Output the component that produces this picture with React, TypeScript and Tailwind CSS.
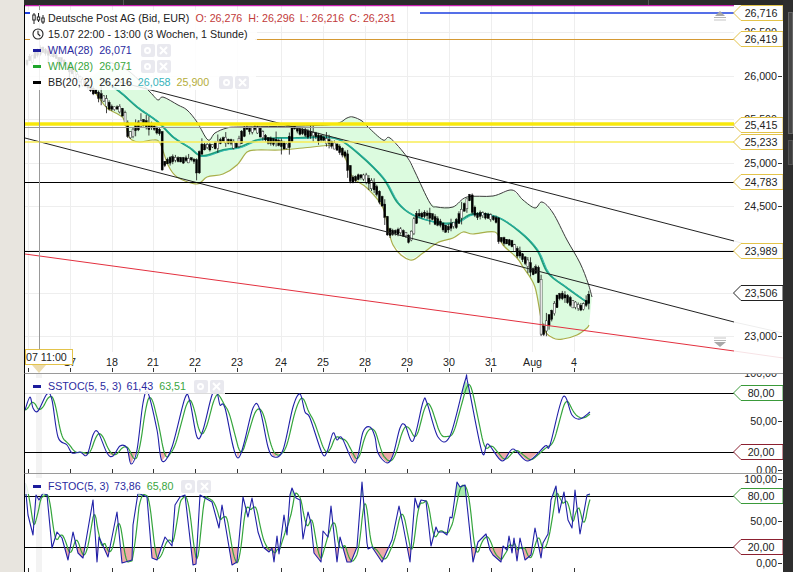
import React from "react";

type P = [number, number];

const TICKS = [28, 70, 112, 153, 195, 237, 281, 323, 365, 407, 449, 491, 532, 574];

const UPPER: P[] = [[110, 62], [130, 72], [150, 92], [158, 100], [163, 97], [178, 105], [187, 110], [197, 122], [208, 140], [215, 133], [227, 128], [240, 127], [300, 126], [335, 124], [347, 118], [353, 117], [362, 121], [368, 127], [383, 140], [390, 138], [407, 157], [415, 172], [430, 203], [437, 207], [453, 207], [467, 197], [493, 196], [512, 190], [523, 200], [535, 208], [542, 202], [553, 213], [567, 240], [580, 263], [588, 283], [592, 297]];
const LOWER: P[] = [[85, 82], [97, 95], [107, 108], [123, 118], [128, 135], [132, 140], [140, 142], [153, 140], [160, 143], [168, 165], [177, 177], [197, 184], [207, 177], [223, 174], [237, 165], [247, 152], [257, 150], [280, 150], [303, 148], [333, 145], [340, 148], [347, 162], [353, 178], [367, 188], [383, 208], [393, 245], [410, 260], [423, 253], [437, 243], [453, 238], [463, 232], [473, 234], [495, 232], [503, 245], [517, 258], [523, 267], [535, 287], [543, 327], [553, 338], [563, 339], [577, 335], [587, 328], [589, 325]];
const MID: P[] = [[100, 78], [120, 92], [137, 107], [158, 122], [173, 137], [190, 148], [202, 156], [223, 150], [240, 147], [257, 140], [277, 138], [297, 138], [323, 137], [340, 140], [360, 155], [383, 178], [397, 202], [413, 215], [440, 223], [457, 222], [473, 214], [497, 217], [520, 232], [537, 250], [548, 273], [567, 288], [588, 303]];
const PRICE: P[] = [[25, 62], [40, 48], [60, 60], [85, 85], [100, 95], [110, 108], [118, 107], [123, 115], [128, 135], [135, 128], [140, 120], [153, 127], [160, 132], [162, 165], [170, 158], [183, 158], [195, 160], [197, 172], [200, 145], [213, 145], [223, 138], [237, 145], [243, 128], [257, 128], [263, 137], [287, 145], [292, 128], [307, 132], [323, 138], [337, 147], [345, 155], [350, 178], [362, 175], [370, 182], [378, 193], [383, 208], [388, 233], [398, 230], [410, 238], [415, 215], [428, 213], [437, 222], [447, 228], [455, 222], [465, 203], [470, 195], [473, 213], [487, 215], [497, 220], [498, 238], [510, 242], [517, 252], [527, 262], [532, 272], [538, 265], [540, 335], [547, 320], [553, 308], [558, 293], [567, 298], [578, 308], [585, 303], [590, 293]];
const SS: P[] = [[25, 410], [30, 397], [33, 408], [38, 411], [47, 394], [52, 400], [58, 437], [67, 445], [72, 453], [80, 452], [87, 455], [93, 435], [98, 432], [107, 453], [113, 456], [120, 446], [127, 448], [131, 464], [137, 450], [143, 403], [148, 393], [157, 430], [162, 461], [172, 447], [185, 398], [190, 402], [197, 437], [203, 430], [212, 395], [217, 393], [220, 405], [225, 408], [238, 458], [253, 408], [260, 410], [268, 447], [274, 457], [283, 450], [293, 407], [300, 394], [305, 412], [310, 418], [322, 453], [327, 452], [333, 433], [337, 440], [342, 438], [355, 463], [363, 432], [370, 427], [375, 437], [378, 453], [387, 463], [393, 455], [400, 428], [405, 425], [413, 441], [423, 402], [427, 403], [438, 437], [450, 436], [465, 381], [468, 384], [482, 452], [488, 444], [502, 461], [513, 449], [528, 461], [545, 446], [550, 445], [563, 397], [572, 415], [580, 419], [590, 412]];
const FS: P[] = [[25, 483], [28, 515], [33, 535], [36, 495], [39, 500], [43, 493], [47, 495], [52, 548], [57, 532], [62, 538], [68, 560], [73, 532], [78, 553], [83, 558], [93, 500], [97, 562], [99, 537], [108, 557], [117, 512], [122, 563], [132, 560], [133, 525], [138, 493], [147, 497], [152, 558], [157, 560], [165, 537], [172, 546], [175, 505], [180, 497], [185, 495], [193, 565], [196, 564], [200, 495], [212, 502], [219, 528], [222, 505], [232, 565], [237, 562], [243, 497], [248, 517], [252, 498], [258, 532], [263, 547], [269, 552], [272, 548], [274, 562], [277, 536], [279, 554], [284, 515], [287, 535], [290, 495], [292, 488], [296, 498], [300, 500], [303, 539], [308, 512], [311, 523], [314, 553], [321, 562], [323, 531], [328, 537], [331, 506], [337, 562], [340, 537], [347, 562], [351, 562], [357, 547], [362, 482], [367, 543], [368, 549], [372, 547], [382, 562], [392, 540], [399, 506], [403, 525], [410, 562], [415, 498], [418, 508], [421, 500], [426, 501], [431, 546], [436, 527], [438, 532], [443, 532], [447, 535], [450, 517], [452, 518], [457, 482], [460, 487], [465, 485], [473, 562], [478, 542], [486, 534], [490, 550], [493, 555], [501, 562], [503, 546], [507, 550], [509, 536], [512, 553], [514, 538], [517, 561], [520, 538], [525, 560], [531, 555], [535, 528], [541, 558], [543, 543], [548, 534], [551, 500], [556, 486], [559, 513], [564, 492], [568, 520], [572, 528], [575, 490], [580, 534], [587, 495], [590, 494]];

const toLine = (pts: P[]) => pts.map(([x, y]) => `${x},${y}`).join(" ");

function smooth(pts: P[]) {
  let d = `M${pts[0][0]} ${pts[0][1]}`;
  for (let i = 0; i < pts.length - 1; i++) {
    const a = pts[Math.max(0, i - 1)];
    const b = pts[i];
    const c = pts[i + 1];
    const e = pts[Math.min(pts.length - 1, i + 2)];
    d += `C${(b[0] + (c[0] - a[0]) / 6).toFixed(1)} ${(b[1] + (c[1] - a[1]) / 6).toFixed(1)} ${(c[0] - (e[0] - b[0]) / 6).toFixed(1)} ${(c[1] - (e[1] - b[1]) / 6).toFixed(1)} ${c[0]} ${c[1]}`;
  }
  return d;
}

function at(pts: P[], x: number) {
  if (x <= pts[0][0]) return pts[0][1];
  for (let i = 0; i < pts.length - 1; i++) {
    if (x <= pts[i + 1][0]) {
      const t = (x - pts[i][0]) / (pts[i + 1][0] - pts[i][0]);
      return pts[i][1] + t * (pts[i + 1][1] - pts[i][1]);
    }
  }
  return pts[pts.length - 1][1];
}

function lagged(pts: P[], win: number, end: number): P[] {
  const out: P[] = [];
  for (let x = 25; x <= end; x += 1) {
    let s = 0;
    for (let k = 0; k < win; k++) s += at(pts, x - k);
    out.push([x, s / win]);
  }
  return out;
}

const rnd = (i: number) => {
  const v = Math.sin(i * 12.9898) * 43758.5453;
  return v - Math.floor(v);
};

function Candles() {
  const bars: React.ReactNode[] = [];
  let i = 0;
  for (let x = 27; x <= 591; x += 2.65, i++) {
    const y0 = at(PRICE, x - 2.65);
    const y1 = at(PRICE, x);
    const top = Math.min(y0, y1) - rnd(i) * 1.5;
    const h = Math.abs(y1 - y0) + 1.5 + rnd(i + 50) * 4;
    const big = rnd(i + 400) > 0.8;
    const wickUp = rnd(i + 100) * (big ? 8 : 2.5);
    const wickDown = rnd(i + 200) * (big ? 8 : 2.5);
    const hollow = rnd(i + 300) > 0.8;
    bars.push(
      <g key={i}>
        <line x1={x} x2={x} y1={top - wickUp} y2={top + h + wickDown} stroke="#111" strokeWidth="0.8" />
        <rect x={x - 1} y={top} width="2" height={h} fill={hollow ? "#fff" : "#000"} stroke="#000" strokeWidth="0.4" />
      </g>
    );
  }
  return <g>{bars}</g>;
}

function XTicks({ y1, y2 }: { y1: number; y2: number }) {
  return (
    <g>
      {TICKS.map((x) => (
        <line key={x} x1={x + 0.5} x2={x + 0.5} y1={y1} y2={y2} stroke="#333" strokeWidth="1" />
      ))}
    </g>
  );
}

function MainPlot() {
  const band = [...UPPER, ...[...LOWER].reverse()];
  return (
    <svg className="block h-[368px] w-[709px]" viewBox="25 5 709 368">
      <rect x="25" y="5" width="709" height="368" fill="#fff" />
      {TICKS.map((x) => (
        <line key={x} x1={x + 0.5} x2={x + 0.5} y1="5" y2="373" stroke="#eeeeee" />
      ))}
      {[32, 76, 119, 163, 206, 250, 293, 336].map((y) => (
        <line key={y} x1="25" x2="734" y1={y + 0.5} y2={y + 0.5} stroke="#eeeeee" />
      ))}
      <polygon points={toLine(band)} fill="#dcfbdf" />
      <path d={smooth(UPPER)} fill="none" stroke="#3a3a3a" strokeWidth="1" />
      <path d={smooth(LOWER)} fill="none" stroke="#a9ae4a" strokeWidth="1.2" />
      <path d={smooth(MID)} fill="none" stroke="#1f9d78" strokeWidth="1.8" />
      <path d={smooth(MID.map(([x, y]) => [x + 1.5, y + 0.5] as P))} fill="none" stroke="#2fb7b0" strokeWidth="1" />
      <Candles />
      <line x1="120" y1="82" x2="734" y2="241" stroke="#222" strokeWidth="1" />
      <line x1="25" y1="138" x2="734" y2="322" stroke="#222" strokeWidth="1" />
      <line x1="25" y1="254" x2="734" y2="351" stroke="#e3303f" strokeWidth="1" />
      <line x1="25" x2="734" y1="5.5" y2="5.5" stroke="#c81bb0" strokeWidth="1.5" />
      <line x1="420" x2="734" y1="13" y2="13" stroke="#1c3fe0" strokeWidth="1.5" />
      <line x1="255" x2="734" y1="39.5" y2="39.5" stroke="#d59a34" strokeWidth="1" />
      <line x1="25" x2="734" y1="124" y2="124" stroke="#f8e80c" strokeWidth="3.5" />
      <line x1="25" x2="734" y1="127.5" y2="127.5" stroke="#9a9a9a" strokeWidth="1" />
      <line x1="25" x2="734" y1="142" y2="142" stroke="#f8ec55" strokeWidth="1.5" />
      <line x1="25" x2="734" y1="182.5" y2="182.5" stroke="#000" strokeWidth="1" />
      <line x1="25" x2="734" y1="251.5" y2="251.5" stroke="#000" strokeWidth="1" />
      <line x1="39.5" x2="39.5" y1="5" y2="349" stroke="#999" strokeWidth="1" />
      <rect x="25" y="352" width="709" height="21" fill="#fff" />
      <XTicks y1={368} y2={372} />
      <polygon points="720,11 725,16 715,16" fill="#a8a8a8" />
      <line x1="714" x2="726" y1="17.5" y2="17.5" stroke="#b5b5b5" />
      <line x1="714" x2="726" y1="20" y2="20" stroke="#c5c5c5" />
      <line x1="714" x2="726" y1="338" y2="338" stroke="#c5c5c5" />
      <line x1="714" x2="726" y1="340.5" y2="340.5" stroke="#b5b5b5" />
      <polygon points="720,347 726,342 714,342" fill="#a8a8a8" />
    </svg>
  );
}

function OscPlot({ id, data, y80, y20, top, h, win, tickY, curved }: { id: string; data: P[]; y80: number; y20: number; top: number; h: number; win: number; tickY: number; curved?: boolean }) {
  const fill = `${toLine(data)} 590,${y20} 25,${y20}`;
  const fillTop = `${toLine(data)} 590,${y80} 25,${y80}`;
  return (
    <svg className="block w-[709px]" height={h} viewBox={`25 ${top} 709 ${h}`}>
      <defs>
        <clipPath id={`${id}-low`}>
          <rect x="25" y={y20} width="709" height="60" />
        </clipPath>
        <clipPath id={`${id}-high`}>
          <rect x="25" y={top} width="709" height={y80 - top} />
        </clipPath>
      </defs>
      <rect x="25" y={top} width="709" height={h} fill="#fff" />
      <rect x="36" y={top} width="6" height={h} fill="#f3f3f3" />
      <polygon points={fill} fill="#eeaaaa" clipPath={`url(#${id}-low)`} />
      <polygon points={fillTop} fill="#a8eab0" clipPath={`url(#${id}-high)`} />
      <line x1="25" x2="734" y1={y80 + 0.5} y2={y80 + 0.5} stroke="#000" strokeWidth="1" />
      <line x1="25" x2="734" y1={y20 + 0.5} y2={y20 + 0.5} stroke="#000" strokeWidth="1" />
      <polyline points={toLine(lagged(data, win, 590))} fill="none" stroke="#35a53c" strokeWidth="1.2" />
      {curved ? (
        <path d={smooth(data)} fill="none" stroke="#2020a8" strokeWidth="1.1" />
      ) : (
        <polyline points={toLine(data)} fill="none" stroke="#2020a8" strokeWidth="1.1" strokeLinejoin="round" />
      )}
      <XTicks y1={tickY} y2={tickY + 4} />
    </svg>
  );
}

function Tag({ pos, text, stroke, color = "text-[#222]" }: { pos: string; text: string; stroke: string; color?: string }) {
  return (
    <div className={`absolute left-[-1px] h-[16px] w-[50px] ${pos}`}>
      <svg className="absolute inset-0" width="50" height="16" viewBox="0 0 50 16">
        <polygon points="50,0.5 8,0.5 0.5,8 8,15.5 50,15.5" fill="#fff" stroke={stroke} strokeWidth="1" />
      </svg>
      <div className={`relative flex h-full items-center justify-center pl-[7px] pr-[1px] text-[10.7px] leading-none ${color}`}>{text}</div>
    </div>
  );
}

function AxisLabel({ pos, text }: { pos: string; text: string }) {
  return (
    <div className={`absolute right-[1px] flex h-[12px] items-center gap-[1px] text-[10.7px] leading-none text-[#222] ${pos}`}>
      <span>{text}</span>
      <span className="h-px w-[4px] bg-[#333]" />
    </div>
  );
}

function Btns() {
  return (
    <div className="flex gap-[2px]">
      <div className="flex h-[13px] w-[14px] items-center justify-center rounded-[2px] bg-[#e9e9ef]">
        <div className="h-[7px] w-[7px] rounded-full border-2 border-white" />
      </div>
      <div className="flex h-[13px] w-[14px] items-center justify-center rounded-[2px] bg-[#e9e9ef]">
        <svg width="9" height="9" viewBox="0 0 9 9">
          <path d="M1 1L8 8M8 1L1 8" stroke="#fff" strokeWidth="2" />
        </svg>
      </div>
    </div>
  );
}

function Dash({ color }: { color: string }) {
  return <div className={`mr-[7px] h-[3px] w-[8px] ${color}`} />;
}

const legendRow = "flex h-[16px] items-center bg-[rgba(255,255,255,0.86)] pl-[8px] text-[10.7px] leading-none whitespace-nowrap";

function Legend() {
  return (
    <div className="absolute left-0 top-[5px] flex flex-col items-start">
      <div className={`${legendRow} w-[382px]`}>
        <svg className="mr-[2px] ml-[-1px]" width="13" height="13" viewBox="0 0 13 13" fill="none" stroke="#222" strokeWidth="1">
          <path d="M2 1V12M6.5 1V10M11 3V12" />
          <rect x="0.8" y="3" width="2.4" height="5" fill="#fff" />
          <rect x="5.3" y="5" width="2.4" height="3" fill="#fff" />
          <rect x="9.8" y="6" width="2.4" height="4" fill="#fff" />
        </svg>
        <span className="ml-[1px] text-[#222]">Deutsche Post AG (Bid, EUR)</span>
        <span className="ml-[6px] text-[#c23a3a]">O: 26,276</span>
        <span className="ml-[6px] text-[#c23a3a]">H: 26,296</span>
        <span className="ml-[5px] text-[#c23a3a]">L: 26,216</span>
        <span className="ml-[5px] text-[#c23a3a]">C: 26,231</span>
      </div>
      <div className={`${legendRow} w-[232px]`}>
        <svg className="mr-[3px] ml-[-1px]" width="12" height="12" viewBox="0 0 12 12" fill="none" stroke="#222" strokeWidth="1.1">
          <circle cx="6" cy="6" r="5" />
          <path d="M6 2.8V6L8.3 8" />
        </svg>
        <span className="ml-[1px] text-[#222]">15.07 22:00 - 13:00 (3 Wochen, 1 Stunde)</span>
      </div>
      <div className={`${legendRow} w-[231px]`}>
        <Dash color="bg-[#1c1c9c]" />
        <span className="text-[#2a2aa0]">WMA(28)</span>
        <span className="ml-[6px] text-[#2a2aa0]">26,071</span>
        <div className="ml-[9px]"><Btns /></div>
      </div>
      <div className={`${legendRow} w-[231px]`}>
        <Dash color="bg-[#1fa52b]" />
        <span className="text-[#3aa640]">WMA(28)</span>
        <span className="ml-[6px] text-[#3aa640]">26,071</span>
        <div className="ml-[9px]"><Btns /></div>
      </div>
      <div className={`${legendRow} w-[231px]`}>
        <Dash color="bg-black" />
        <span className="text-[#222]">BB(20, 2)</span>
        <span className="ml-[6px] text-[#222]">26,216</span>
        <span className="ml-[6px] text-[#37b3bb]">26,058</span>
        <span className="ml-[6px] text-[#b5ad3a]">25,900</span>
        <div className="ml-[10px]"><Btns /></div>
      </div>
    </div>
  );
}

function OscLegend({ name, a, b, pos }: { name: string; a: string; b: string; pos: string }) {
  return (
    <div className={`absolute left-0 ${pos} ${legendRow}`}>
      <Dash color="bg-[#1c1c9c]" />
      <span className="text-[#2a2aa0]">{name}</span>
      <span className="ml-[5px] text-[#2a2aa0]">{a}</span>
      <span className="ml-[6px] text-[#3aa640]">{b}</span>
      <div className="ml-[8px] pr-[1px]"><Btns /></div>
    </div>
  );
}

export default function App() {
  return (
    <div className="flex h-[572px] w-[793px] overflow-hidden bg-[#2e2e2e] [font-family:'Liberation_Sans',Arial,sans-serif]">
      <div className="h-full w-[24px] bg-[#e8e5df]" />
      <div className="flex h-full w-[759px] flex-col">
        <div className="flex h-[5px] bg-[#2b2b2b]">
          <div className="h-full w-[100px] border-r border-[#555]" />
          <div className="ml-[524px] h-full w-px bg-[#555]" />
        </div>

        {/* price panel */}
        <div className="relative flex h-[368px] border-l border-black bg-white">
          <div className="relative h-full w-[709px]">
            <MainPlot />
            <Legend />
            <div className="absolute left-0 top-[7px] h-[2px] w-[5px] bg-[#1c3fe0]" />
            <div className="absolute left-0 top-[34px] h-px w-[5px] bg-[#d59a34]" />
            <div className="absolute left-[4px] right-0 top-[351px] h-[14px]">
              {[
                ["left-[35px]", "17"], ["left-[77px]", "18"], ["left-[118px]", "21"], ["left-[160px]", "22"],
                ["left-[202px]", "23"], ["left-[246px]", "24"], ["left-[288px]", "25"], ["left-[330px]", "28"],
                ["left-[372px]", "29"], ["left-[414px]", "30"], ["left-[456px]", "31"], ["left-[494px]", "Aug"], ["left-[542px]", "4"],
              ].map(([l, t]) => (
                <span key={t} className={`absolute top-[1px] text-[10.7px] leading-none text-[#222] ${l}`}>{t}</span>
              ))}
            </div>
            <div className="absolute left-0 top-[344px] flex h-[16px] w-[48px] items-center border border-[#e3c34a] bg-white text-[10.7px] leading-none text-[#222]">07 11:00</div>
            <svg className="absolute left-[7px] top-[360px]" width="14" height="8" viewBox="0 0 14 8">
              <polygon points="0,0 14,0 7,8" fill="#ecdcae" />
            </svg>
          </div>
          <div className="relative h-full w-[49px]">
            <svg className="absolute inset-0" width="49" height="368" viewBox="734 5 49 368">
              <line x1="734" y1="322" x2="783" y2="333" stroke="#eeeeee" />
              <line x1="734" y1="351" x2="783" y2="358" stroke="#f7e3e6" />
              <line x1="734" y1="241" x2="783" y2="254" stroke="#eeeeee" />
            </svg>
            <AxisLabel pos="top-[21px]" text="26,500" />
            <AxisLabel pos="top-[65px]" text="26,000" />
            <AxisLabel pos="top-[108px]" text="25,500" />
            <AxisLabel pos="top-[152px]" text="25,000" />
            <AxisLabel pos="top-[195px]" text="24,500" />
            <AxisLabel pos="top-[325px]" text="23,000" />
            <Tag pos="top-[0px]" text="26,716" stroke="#e3c34a" />
            <Tag pos="top-[26px]" text="26,419" stroke="#e3c34a" />
            <Tag pos="top-[112px]" text="25,415" stroke="#e3c34a" />
            <Tag pos="top-[129px]" text="25,233" stroke="#e3c34a" />
            <Tag pos="top-[169px]" text="24,783" stroke="#e3c34a" />
            <Tag pos="top-[238px]" text="23,989" stroke="#e3c34a" />
            <Tag pos="top-[280px]" text="23,506" stroke="#222" />
          </div>
        </div>

        {/* SSTOC */}
        <div className="relative flex h-[100px] overflow-hidden border-l border-t border-l-black border-t-[#9a9a9a] bg-white">
          <div className="relative h-full w-[709px]">
            <OscPlot id="ss" data={SS} y80={393} y20={452} top={374} h={99} win={7} tickY={469} curved />
            <OscLegend name="SSTOC(5, 5, 3)" a="61,43" b="63,51" pos="top-[4px]" />
          </div>
          <div className="relative h-full w-[49px]">
            <AxisLabel pos="top-[-7px]" text="100,00" />
            <AxisLabel pos="top-[41px]" text="50,00" />
            <AxisLabel pos="top-[90px]" text="0,00" />
            <Tag pos="top-[11px]" text="80,00" stroke="#3a9a3a" />
            <Tag pos="top-[70px]" text="20,00" stroke="#8c2030" />
          </div>
        </div>

        {/* FSTOC */}
        <div className="relative flex h-[99px] overflow-hidden border-l border-t border-l-black border-t-[#9a9a9a] bg-white">
          <div className="relative h-full w-[709px]">
            <OscPlot id="fs" data={FS} y80={496} y20={547} top={474} h={98} win={7} tickY={568} />
            <OscLegend name="FSTOC(5, 3)" a="73,86" b="65,80" pos="top-[4px]" />
          </div>
          <div className="relative h-full w-[49px]">
            <AxisLabel pos="top-[-1px]" text="100,00" />
            <AxisLabel pos="top-[41px]" text="50,00" />
            <AxisLabel pos="top-[83px]" text="0,00" />
            <Tag pos="top-[14px]" text="80,00" stroke="#3a9a3a" />
            <Tag pos="top-[65px]" text="20,00" stroke="#8c2030" />
          </div>
        </div>
      </div>

      <div className="flex h-full w-[10px] flex-col pl-[5px] pt-[12px]">
        <div className="h-[122px] w-full border border-[#666] bg-[#474747]" />
        <div className="mt-[6px] h-[25px] w-full border border-[#555] bg-[#3e3e3e]" />
      </div>
    </div>
  );
}
